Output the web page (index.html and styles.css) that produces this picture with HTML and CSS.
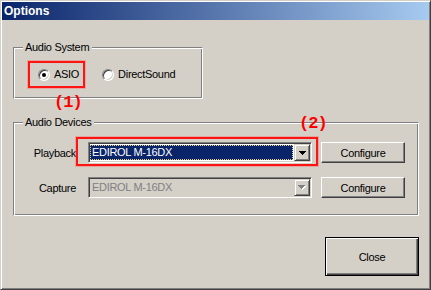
FILE: index.html
```html
<!DOCTYPE html>
<html lang="en">
<head>
<meta charset="utf-8">
<title>Options</title>
<link rel="stylesheet" href="styles.css">
</head>
<body>
<div class="window">
  <div class="titlebar"><span class="title">Options</span></div>
  <div class="client">
    <fieldset class="group group-system">
      <legend>Audio System</legend>
      <div class="radios">
        <span class="mark">
          <span class="radio"><span class="radio-dot checked"></span>ASIO</span>
          <span class="callout callout-1">(1)</span>
        </span>
        <span class="radio radio-ds"><span class="radio-dot"></span>DirectSound</span>
      </div>
    </fieldset>

    <fieldset class="group group-devices">
      <legend>Audio Devices</legend>
      <div class="rows">
        <div class="row">
          <span class="field-label">Playback</span>
          <div class="combo-wrap">
            <div class="combo">
              <div class="combo-text"><span class="combo-sel">EDIROL M-16DX</span></div>
              <span class="drop"><svg width="7" height="4" viewBox="0 0 7 4"><path d="M0 0h7v1h-1v1h-1v1h-1v1h-1v-1h-1v-1h-1v-1h-1z" fill="#000"/></svg></span>
            </div>
            <span class="mark-box"></span>
            <span class="callout callout-2">(2)</span>
          </div>
          <button class="btn btn-config" type="button">Configure</button>
        </div>
        <div class="row">
          <span class="field-label">Capture</span>
          <div class="combo-wrap">
            <div class="combo combo-disabled">
              <div class="combo-text"><span class="combo-value">EDIROL M-16DX</span></div>
              <span class="drop"><svg width="8" height="5" viewBox="0 0 8 5"><path d="M1 1h7v1h-1v1h-1v1h-1v1h-1v-1h-1v-1h-1v-1h-1z" fill="#fff"/><path d="M0 0h7v1h-1v1h-1v1h-1v1h-1v-1h-1v-1h-1v-1h-1z" fill="#808080"/></svg></span>
            </div>
          </div>
          <button class="btn btn-config" type="button">Configure</button>
        </div>
      </div>
    </fieldset>

    <div class="footer">
      <button class="btn btn-default" type="button">Close</button>
    </div>
  </div>
</div>
</body>
</html>
```

FILE: styles.css
```css
* { box-sizing: border-box; }

html, body {
  margin: 0;
  padding: 0;
  background: #d4d0c8;
}

body {
  font-family: "Liberation Sans", Arial, sans-serif;
  font-size: 11px;
  letter-spacing: -0.3px;
  color: #000;
}

.window {
  width: 431px;
  height: 290px;
  padding: 1px;
  background: #d4d0c8;
  border: 1px solid;
  border-color: #d4d0c8 #404040 #404040 #d4d0c8;
  box-shadow: inset 1px 1px #fff, inset -1px -1px #808080;
  display: flex;
  flex-direction: column;
}

.titlebar {
  height: 18px;
  background: linear-gradient(to right, #0a246a, #a6caf0);
  padding-left: 2px;
  display: flex;
  align-items: center;
}

.title {
  color: #fff;
  font-weight: bold;
  font-size: 12px;
  line-height: 18px;
  letter-spacing: 0;
}

.client {
  padding: 0 10px 0 11px;
  display: flex;
  flex-direction: column;
}

.group {
  margin: 0;
  padding: 0;
  min-width: 0;
  border: 1px solid;
  border-color: #808080 #fff #fff #808080;
  box-shadow: inset 1px 1px #fff, inset -1px -1px #808080;
}

.group legend {
  margin-left: 9px;
  padding: 0 3px 0 2px;
  line-height: 13px;
  background: #d4d0c8;
}

.group-system {
  width: 190px;
  margin-top: 21px;
}

.group-devices {
  margin-top: 17px;
}

.radios {
  display: flex;
  align-items: center;
  padding: 7px 0 10px 14px;
}

.mark {
  position: relative;
  display: flex;
  align-items: center;
  height: 27px;
  padding: 0 4px 0 8px;
  border: 2px solid #ff1414;
  box-shadow: 0 0 0 1px rgba(255, 90, 90, 0.35);
}

.radio {
  display: flex;
  align-items: center;
  line-height: 13px;
}

.radio-ds {
  margin-left: 17px;
}

.radio-dot {
  position: relative;
  width: 12px;
  height: 12px;
  margin-right: 4px;
  border-radius: 50%;
  background: #fff;
  border: 1px solid;
  border-color: #808080 #fff #fff #808080;
  box-shadow: inset 1px 1px #404040, inset -1px -1px #d4d0c8;
}

.radio-dot.checked::after {
  content: "";
  position: absolute;
  left: 3px;
  top: 3px;
  width: 4px;
  height: 4px;
  border-radius: 50%;
  background: #000;
}

.callout {
  position: absolute;
  color: #ff0000;
  font-family: "Liberation Mono", "Courier New", monospace;
  font-weight: bold;
  font-size: 17px;
  line-height: 18px;
  letter-spacing: -1px;
  white-space: nowrap;
}

.callout-1 {
  left: 24px;
  top: 31px;
}

.rows {
  display: flex;
  flex-direction: column;
  gap: 14px;
  padding: 13px 0 17px 0;
}

.row {
  display: flex;
  align-items: center;
  height: 21px;
}

.field-label {
  width: 62px;
  text-align: right;
}

.combo-wrap {
  position: relative;
  margin-left: 12px;
}

.combo {
  width: 224px;
  height: 21px;
  display: flex;
  padding: 1px;
  border: 1px solid;
  border-color: #808080 #fff #fff #808080;
  box-shadow: inset 1px 1px #404040, inset -1px -1px #d4d0c8;
  background: #fff;
}

.combo-text {
  flex: 1;
  padding: 1px 1px 1px 0;
  display: flex;
  background: #fff;
}

.combo-sel {
  flex: 1;
  background: #0a246a;
  color: #fff;
  border: 1px dotted #e6d08a;
  padding-left: 1px;
  line-height: 13px;
}

.combo-disabled,
.combo-disabled .combo-text {
  background: #d4d0c8;
}

.combo-value {
  color: #808080;
  padding-left: 2px;
  line-height: 15px;
}

.drop {
  width: 16px;
  height: 17px;
  display: flex;
  align-items: center;
  justify-content: center;
  background: #d4d0c8;
  border: 1px solid;
  border-color: #d4d0c8 #404040 #404040 #d4d0c8;
  box-shadow: inset 1px 1px #fff, inset -1px -1px #808080;
}

.drop svg {
  display: block;
}

.mark-box {
  position: absolute;
  left: -12px;
  top: -5px;
  right: -6px;
  bottom: -3px;
  border: 2px solid #ff1414;
  box-shadow: 0 0 0 1px rgba(255, 90, 90, 0.35);
}

.callout-2 {
  left: 211px;
  top: -27px;
}

.btn {
  font-family: "Liberation Sans", Arial, sans-serif;
  font-size: 11px;
  letter-spacing: -0.3px;
  color: #000;
  background: #d4d0c8;
  padding: 0;
  margin: 0;
  border: 1px solid;
  border-color: #fff #404040 #404040 #fff;
  box-shadow: inset -1px -1px #808080;
}

.btn-config {
  width: 84px;
  height: 21px;
  margin-left: 9px;
}

.footer {
  display: flex;
  justify-content: flex-end;
  margin-top: 21px;
}

.btn-default {
  width: 94px;
  height: 39px;
  border: 1px solid #000;
  box-shadow: inset 1px 1px #fff, inset -1px -1px #404040, inset -2px -2px #808080;
}
```
